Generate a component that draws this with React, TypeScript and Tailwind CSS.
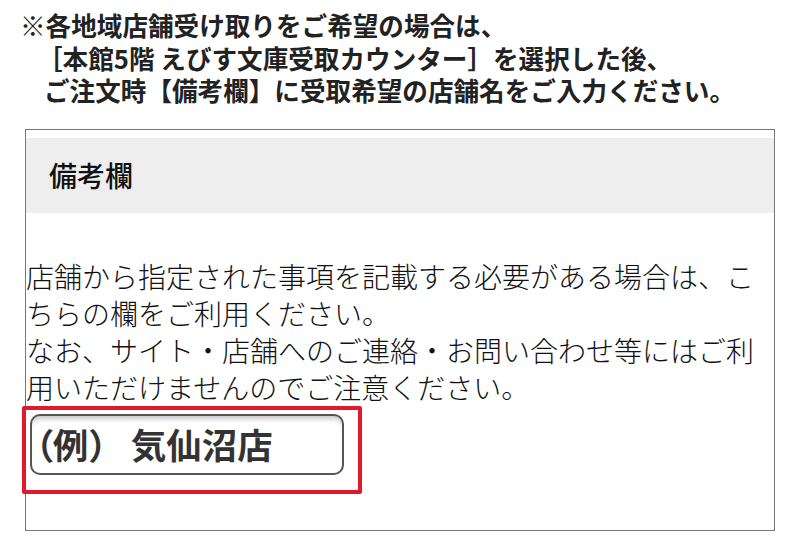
const jp = '"Noto Sans CJK JP", "Noto Sans", sans-serif';

function Notice() {
  return (
    <div
      className="pl-[20px] pt-[9px] text-[25.6px] leading-[32.5px] font-bold text-[#222] whitespace-nowrap"
      style={{ fontFamily: jp }}
    >
      <div>※各地域店舗受け取りをご希望の場合は、</div>
      <div className="pl-[17px]">［本館5階 えびす文庫受取カウンター］を選択した後、</div>
      <div className="pl-[24px]">ご注文時【備考欄】に受取希望の店舗名をご入力ください。</div>
    </div>
  );
}

function ExampleButton() {
  return (
    <div className="-ml-[4px] w-[340px] h-[88px] border-[4px] border-[#e0192d] rounded-[2px] pl-[4px] pt-[4px]">
      <div className="w-[314px] h-[61px] border-2 border-[#555] rounded-[10px] bg-white shadow-[inset_0_6px_5px_-3px_rgba(0,0,0,0.22)] flex items-center pl-[3px]">
        <span className="text-[35.5px] font-bold text-[#333] leading-none" style={{ fontFamily: jp }}>
          <span className="[font-feature-settings:'palt']">（</span>例<span className="mr-[7px]">）</span>気仙沼店
        </span>
      </div>
    </div>
  );
}

export default function App() {
  return (
    <div className="w-[800px] h-[550px] bg-white overflow-hidden">
      <Notice />
      <div className="ml-[25px] mt-[22px] w-[750px] h-[402px] border border-[#777] pt-[8px]">
        <div className="h-[75px] bg-[#eeeeee] flex items-center pl-[23px]">
          <span className="text-[28px] font-medium text-[#111]" style={{ fontFamily: jp }}>
            備考欄
          </span>
        </div>
        <div
          className="mt-[45px] text-[28px] leading-[37px] font-light text-[#111] whitespace-nowrap"
          style={{ fontFamily: jp }}
        >
          <div>店舗から指定された事項を記載する必要がある場合は、こ</div>
          <div>ちらの欄をご利用ください。</div>
          <div>なお、サイト・店舗へのご連絡・お問い合わせ等にはご利</div>
          <div>用いただけませんのでご注意ください。</div>
        </div>
        <ExampleButton />
      </div>
    </div>
  );
}
